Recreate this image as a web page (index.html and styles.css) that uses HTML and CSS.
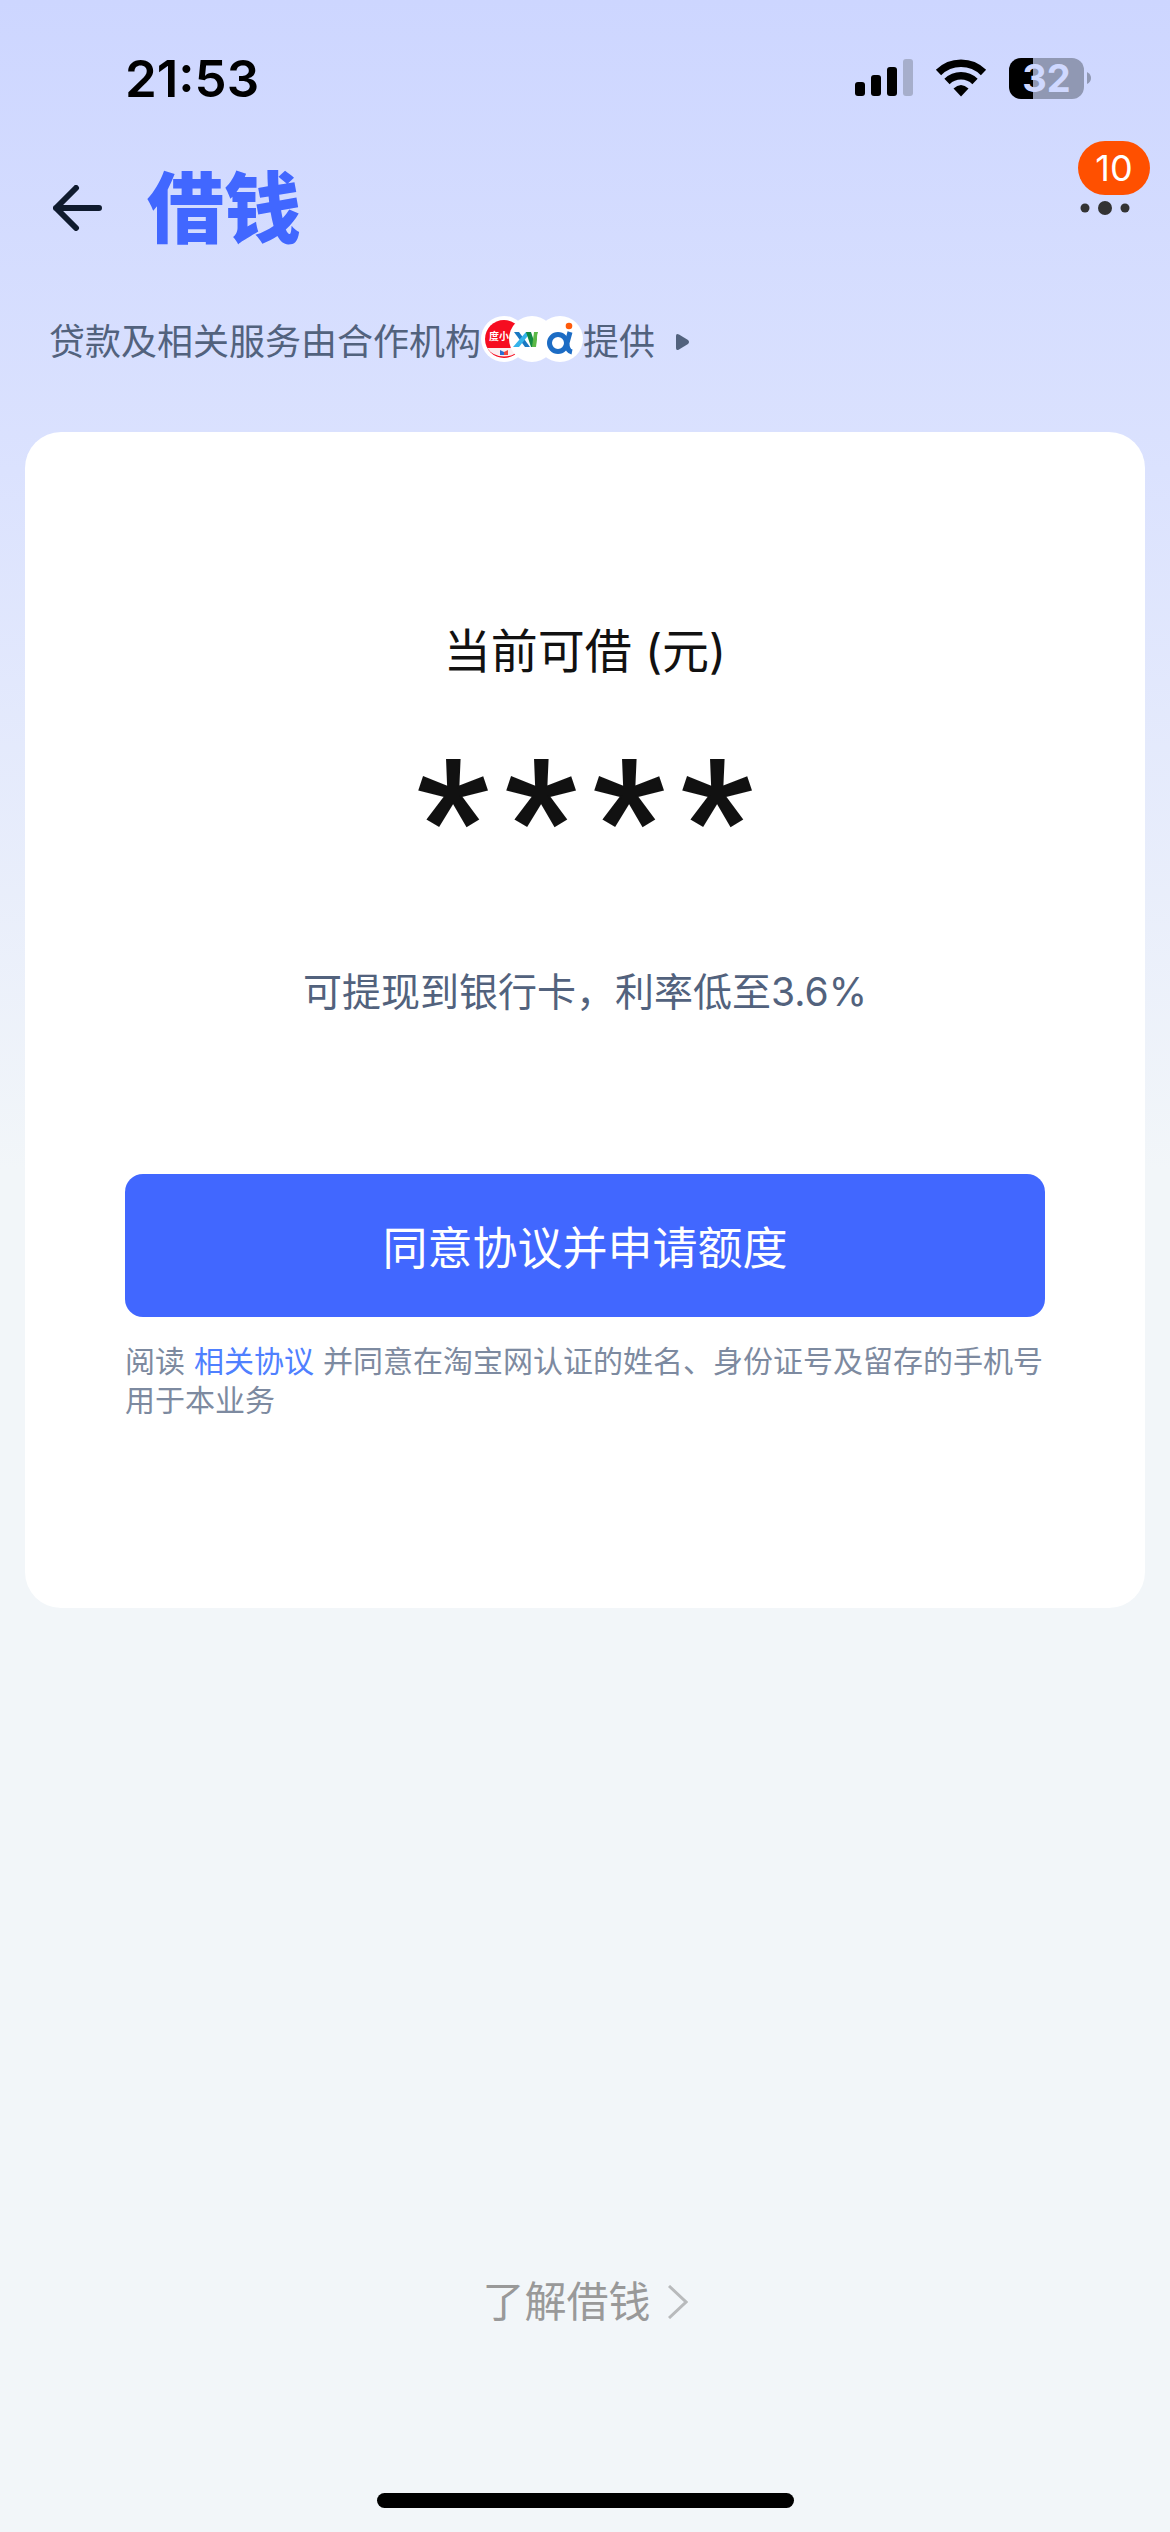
FILE: index.html
```html
<!DOCTYPE html>
<html lang="zh-CN">
<head>
<meta charset="utf-8">
<title>借钱</title>
<meta name="viewport" content="width=device-width, initial-scale=1">
<link rel="stylesheet" href="styles.css">
</head>
<body>
<div class="page">
  <div class="status-bar">
    <time class="clock">21:53</time>
    <div class="status-icons">
      <svg width="58" height="38" viewBox="0 0 58 38" aria-hidden="true">
        <rect x="0" y="23" width="10" height="14" rx="3"/>
        <rect x="16" y="16" width="10" height="21" rx="3"/>
        <rect x="32" y="8" width="10" height="29" rx="3"/>
        <rect x="48" y="0" width="10" height="37" rx="3" fill="#a6aecb"/>
      </svg>
      <svg width="52" height="38" viewBox="0 0 52 38" aria-hidden="true">
        <path d="M3.500 13.500A32 32 0 0 1 48.500 13.500" fill="none" stroke="#000" stroke-width="7.500"/>
        <path d="M12 22.500A20 20 0 0 1 40 22.500" fill="none" stroke="#000" stroke-width="7.500"/>
        <path d="M18.500 29.500Q26 22.500 33.500 29.500L26 37.500Z"/>
      </svg>
      <div class="battery">
        <span class="battery-level">32</span>
        <svg width="5" height="12" viewBox="0 0 5 12" aria-hidden="true"><path d="M0 0Q4 2 4 6Q4 10 0 12Z" fill="#9098b3"/></svg>
      </div>
    </div>
  </div>

  <header class="nav">
    <button class="icon-button" type="button" aria-label="返回">
      <svg width="50" height="46" viewBox="0 0 50 46" fill="none" stroke="#0f1b2e" stroke-width="6" stroke-linecap="round" stroke-linejoin="round" aria-hidden="true"><path d="M23 3L3 23L23 43M3 23H46"/></svg>
    </button>
    <h1 class="title">借钱</h1>
    <button class="icon-button more" type="button" aria-label="更多">
      <svg width="50" height="14" viewBox="0 0 50 14" fill="#333" aria-hidden="true"><circle cx="5" cy="7" r="4.500"/><circle cx="25" cy="7" r="7"/><circle cx="45" cy="7" r="4.500"/></svg>
      <span class="badge">10</span>
    </button>
  </header>

  <a class="partners" href="#partners">
    <span>贷款及相关服务由合作机构</span>
    <svg width="102" height="46" viewBox="0 0 102 46" aria-hidden="true">
      <circle cx="23" cy="23" r="23" fill="#fff"/>
      <circle cx="23" cy="23" r="19" fill="#f60d20"/>
      <path d="M6 32H40Q34 40.500 23 40.500T6 32Z" fill="#fbeff0"/>
      <text x="8" y="24" font-size="10" font-weight="700" fill="#fff">度小</text>
      <path d="M19 34l4 2v3h-4z" fill="#2d6fd0"/><path d="M27 34l-4 2v3h4z" fill="#f0483e"/>
      <circle cx="51" cy="23" r="23" fill="#fff"/>
      <path d="M33 16h5l11 15h-5z" fill="#1a78c2"/><path d="M32 31l13-15h5l-12 15z" fill="#35b3ea"/>
      <path d="M45 16h5l5 15h-5z" fill="#128a43"/><path d="M51 31l2-15h4l-2 15z" fill="#5bb847"/>
      <circle cx="79" cy="23" r="23" fill="#fff"/>
      <circle cx="77" cy="27" r="8.500" fill="none" stroke="#1c6cc4" stroke-width="5"/>
      <path d="M89 16L86 27Q86 35 91 36" fill="none" stroke="#1c6cc4" stroke-width="5"/>
      <circle cx="88" cy="10" r="3.300" fill="#ff5a0a"/>
    </svg>
    <span>提供</span>
    <svg class="partners-arrow" width="14" height="16" viewBox="0 0 14 16" fill="#52627d" aria-hidden="true"><path d="M0 2Q0-1 3 .5L12 6Q14 8 12 10L3 15.500Q0 17 0 14Z"/></svg>
  </a>

  <main class="card">
    <h2 class="card-title">当前可借 (元)</h2>
    <p class="amount"><span>*</span><span>*</span><span>*</span><span>*</span></p>
    <p class="rate">可提现到银行卡，利率低至3.6%</p>
    <button class="apply" type="button">同意协议并申请额度</button>
    <p class="terms">阅读<a href="#terms">相关协议</a>并同意在淘宝网认证的姓名、身份证号及留存的手机号用于本业务</p>
  </main>

  <footer class="footer">
    <a class="learn" href="#about">了解借钱
      <svg width="20" height="34" viewBox="0 0 20 34" fill="none" stroke="#b8babc" stroke-width="3" aria-hidden="true"><path d="M1 1L18 17L1 33"/></svg>
    </a>
    <div class="home-bar"></div>
  </footer>
</div>
</body>
</html>
```
FILE: styles.css
```css
* {
  box-sizing: border-box;
}

body {
  margin: 0;
  background: #f2f6f9;
  font-family: Inter, "Noto Sans CJK SC", sans-serif;
}

h1, h2, p {
  margin: 0;
  font-weight: 400;
}

a {
  color: inherit;
  text-decoration: none;
}

button {
  border: 0;
  padding: 0;
  background: none;
  font: inherit;
}

svg {
  display: block;
  flex: none;
}

.page {
  display: flex;
  flex-direction: column;
  min-height: 100vh;
  background: linear-gradient(#cdd6ff 0, #dbe2fe 470px, #f2f6f9 1170px);
}

.status-bar {
  display: flex;
  align-items: center;
  justify-content: space-between;
  height: 156px;
  padding: 0 78px 0 125px;
}

.clock {
  font-size: 51px;
  font-weight: 600;
}

.status-icons {
  display: flex;
  align-items: center;
  gap: 22px;
}

.battery {
  display: flex;
  align-items: center;
  gap: 3px;
}

.battery-level {
  width: 75px;
  border-radius: 12px;
  background: linear-gradient(90deg, #000 24px, #9098b3 24px);
  color: #cfd8ff;
  font-size: 38px;
  font-weight: 700;
  line-height: 41px;
  text-align: center;
}

.nav {
  display: flex;
  align-items: center;
  height: 104px;
  padding: 0 40px 0 53px;
}

.title {
  padding-top: 2px;
  margin-left: 44px;
  color: #4167ff;
  font-size: 77px;
  font-weight: 900;
  line-height: 100px;
}

.more {
  position: relative;
  margin-left: auto;
}

.badge {
  position: absolute;
  right: -20px;
  bottom: 20px;
  width: 72px;
  border-radius: 27px;
  background: #ff5000;
  color: #fff;
  font-size: 36px;
  line-height: 54px;
  text-align: center;
}

.partners {
  display: flex;
  align-items: center;
  height: 158px;
  padding: 0 49px;
  color: #52627d;
  font-size: 36px;
}

.partners-arrow {
  margin-top: 6px;
  margin-left: 21px;
}

.card {
  display: flex;
  flex-direction: column;
  margin: 14px 25px 0;
  padding: 184px 100px 188px;
  border-radius: 36px;
  background: #fff;
}

.card-title {
  color: #111;
  font-size: 47px;
  line-height: 70px;
  text-align: center;
}

.amount {
  display: flex;
  justify-content: center;
  margin-top: 55px;
  padding-bottom: 34px;
  color: #111;
  font-family: "Liberation Sans", Arial, sans-serif;
  font-size: 188px;
  line-height: 166px;
  -webkit-text-stroke: 2px #111;
}

.amount span {
  width: 88px;
  text-align: center;
}

.rate {
  margin-top: 21px;
  color: #52627d;
  font-size: 39px;
  line-height: 60px;
  text-align: center;
}

.apply {
  height: 143px;
  margin-top: 152px;
  border-radius: 18px;
  background: #4167ff;
  color: #fff;
  font-size: 45px;
}

.terms {
  margin-top: 25px;
  color: #7d8aa0;
  font-size: 30px;
  line-height: 39px;
}

.terms a {
  margin: 0 9px;
  color: #4f80ff;
}

.footer {
  display: flex;
  flex-direction: column;
  align-items: center;
  gap: 161px;
  margin-top: auto;
  padding-bottom: 24px;
}

.learn {
  display: flex;
  align-items: center;
  gap: 17px;
  color: #999;
  font-size: 42px;
  line-height: 60px;
}

.home-bar {
  width: 417px;
  height: 15px;
  border-radius: 8px;
  background: #000;
}
```
